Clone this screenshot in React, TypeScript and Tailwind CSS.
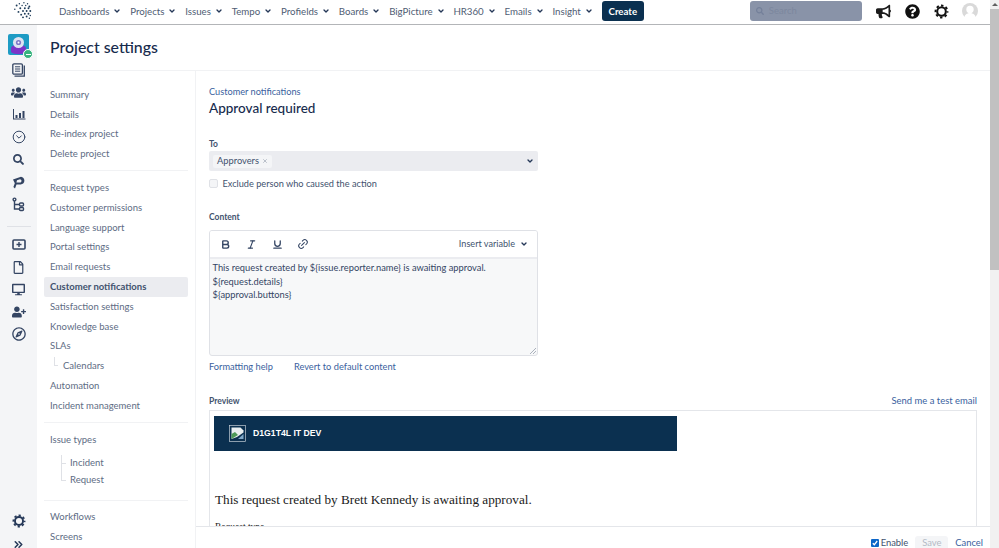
import { Bold, ChevronDown, Italic, Link2, Underline, X, ChevronsRight, CircleChevronDown } from "lucide-react";
import { FaBullhorn, FaQuestionCircle, FaUsers, FaSearch, FaRegFile, FaUserPlus, FaRegCompass, FaDesktop } from "react-icons/fa";

const menus = ["Dashboards", "Projects", "Issues", "Tempo", "Profields", "Boards", "BigPicture", "HR360", "Emails", "Insight"];

const groupA = ["Summary", "Details", "Re-index project", "Delete project"];
const groupB = ["Request types", "Customer permissions", "Language support", "Portal settings", "Email requests", "Customer notifications", "Satisfaction settings", "Knowledge base", "SLAs"];

function Logo() {
  // dotted globe mark
  const dots = [[3,9],[5,5],[7,12],[8,3],[9,8],[10,15],[11,5],[12,11],[12,18],[13,2],[14,8],[14,14],[15,5],[16,11],[16,17],[17,3],[18,8],[18,14],[19,19],[19,6],[20,11],[20,16]];
  return (
    <svg width="22" height="20" viewBox="0 0 24 22" className="text-[#1d3b58]">
      {dots.map(([x, y], i) => <circle key={i} cx={x} cy={y} r={i % 3 === 0 ? 0.8 : 1.05} fill="currentColor" />)}
    </svg>
  );
}

function ProjectAvatar() {
  return (
    <div className="relative h-[21px] w-[21px]">
      <svg width="21" height="21" viewBox="0 0 21 21" className="rounded-[2px]">
        <rect width="21" height="21" fill="#1d9bc4" />
        <path d="M3 14c1-3 4-3 7-3s7 0 8 3v4c-3 3-12 3-15 0z" fill="#7b35c8" />
        <circle cx="10.5" cy="8.5" r="5.5" fill="#dfe3f2" />
        <circle cx="10.5" cy="8.5" r="2.6" fill="#7f79c8" />
        <circle cx="10.5" cy="8.5" r="1" fill="#fff" />
      </svg>
      <div className="absolute right-[-4px] bottom-[-4px] flex h-[10px] w-[10px] items-center justify-center rounded-full border border-white bg-[#36b37e]">
        <div className="h-[1px] w-[5px] bg-white" />
      </div>
    </div>
  );
}

function CogIcon({ size, color }: { size: number; color: string }) {
  // ring with chunky teeth
  return (
    <svg width={size} height={size} viewBox="0 0 16 16" fill="none" stroke={color}>
      <circle cx="8" cy="8" r="4.6" strokeWidth="2.2" />
      <circle cx="8" cy="8" r="6.4" strokeWidth="2" strokeDasharray="2.6 2.43" strokeDashoffset="1.3" />
    </svg>
  );
}

function IssuesIcon() {
  return (
    <svg width="13" height="14" viewBox="0 0 13 14" fill="none" stroke="#344563">
      <rect x="0.8" y="0.8" width="9.6" height="10.4" rx="1.2" strokeWidth="1.3" />
      <path d="M3 3.800h5.200M3 6h5.200M3 8.200h5.200" strokeWidth="1" />
      <path d="M12.300 2.500v10.700H2.500" strokeWidth="1.300" />
    </svg>
  );
}

function ChartIcon() {
  return (
    <svg width="14" height="13" viewBox="0 0 14 13" fill="#344563">
      <path d="M1 1v10.5h12.5v-1H2V1z" />
      <rect x="3.5" y="7" width="2" height="3" />
      <rect x="7" y="5" width="2" height="5" />
      <rect x="10.5" y="3" width="2" height="7" />
    </svg>
  );
}

function TreeIcon() {
  return (
    <svg width="13" height="15" viewBox="0 0 13 15" fill="none" stroke="#344563" strokeWidth="1.4">
      <circle cx="2.5" cy="2.5" r="1.4" />
      <path d="M2.5 4v8h5M2.5 7.500h5" />
      <rect x="7.500" y="6" width="4" height="3" rx="1" />
      <rect x="7.500" y="10.500" width="4" height="3" rx="1" />
    </svg>
  );
}

function ShipIcon() {
  return (
    <svg width="13" height="13" viewBox="0 0 13 13" fill="#344563">
      <path d="M1 3.500 9 .8c2 .2 3.400 2 3.400 4 0 2.300-2 3.600-3.600 3.600H4.500L3 12.600 1.400 11l1.400-3.800zM5 4.200l-.6 2.200h3.500c1 0 1.600-.7 1.600-1.500S8.800 3.300 8 3.300z" />
    </svg>
  );
}

function AddScreenIcon() {
  return (
    <svg width="14" height="11" viewBox="0 0 14 11" fill="none" stroke="#344563" strokeWidth="1.6">
      <rect x="1" y="1" width="12" height="9" rx="1" />
      <path d="M7 3v5M4.500 5.500h5" strokeWidth="1.4" />
    </svg>
  );
}

function RailIcon({ children, h = "h-[22.4px]" }: { children: React.ReactNode; h?: string }) {
  return <div className={`flex w-full items-center justify-center ${h}`}>{children}</div>;
}

function NavRow({ label, active }: { label: string; active?: boolean }) {
  return (
    <div className={`flex h-[19.8px] items-center rounded-[2px] pl-[6px] ${active ? "bg-[#ebecf0] font-bold text-[#42526e]" : "text-[#5e6c84]"}`}>
      {label}
    </div>
  );
}

function Divider() {
  return <div className="h-px bg-[#f1f2f4]" />;
}

export default function App() {
  return (
    <div className="flex h-[548px] w-[999px] overflow-hidden bg-white font-['Lato','Noto_Sans',sans-serif] text-[10px] text-[#172b4d]">
      <div className="flex min-w-0 flex-1 flex-col">
        {/* top bar */}
        <header className="flex h-[25px] shrink-0 items-center border-b-[1.5px] border-[#b3b5b8] bg-white pb-[2px]">
          <div className="ml-[12px] w-[47px] shrink-0"><Logo /></div>
          <nav className="flex shrink-0 items-center gap-[8.800px] text-[9.700px] text-[#4f5d73]">
            {menus.map((m) => (
              <span key={m} className="flex items-center gap-[4px]">
                {m}
                <ChevronDown size={8} strokeWidth={4} className="text-[#253858]" />
              </span>
            ))}
          </nav>
          <button className="ml-[9px] flex h-[20px] w-[42px] shrink-0 items-center justify-center rounded-[3px] bg-[#0b3050] text-[9.700px] font-bold text-white">Create</button>
          <div className="ml-[106px] flex h-[20px] w-[112px] shrink-0 items-center gap-[5px] rounded-[3px] bg-[#8993a8] pl-[6px] text-[9.500px] text-[#7c879e]">
            <FaSearch size={8} className="text-[#74809a]" />
            Search
          </div>
          <FaBullhorn size={15} className="ml-[14px] shrink-0 text-[#1b1b1b]" />
          <FaQuestionCircle size={15} className="ml-[14px] shrink-0 text-[#111]" />
          <span className="ml-[14px] shrink-0"><CogIcon size={15} color="#111" /></span>
          <svg width="16" height="16" viewBox="0 0 16 16" className="ml-[13px] shrink-0">
            <circle cx="8" cy="8" r="8" fill="#d9d9d9" />
            <circle cx="8" cy="6.500" r="3.700" fill="#fff" />
            <path d="M2 16c0-4 3-6 6-6s6 2 6 6z" fill="#fff" />
          </svg>
        </header>

        <div className="flex min-h-0 flex-1">
          {/* left rail */}
          <aside className="flex w-[37px] shrink-0 flex-col items-center bg-[#f4f5f7] pt-[9px]">
            <div className="mb-[4px]"><ProjectAvatar /></div>
            <RailIcon><IssuesIcon /></RailIcon>
            <RailIcon><FaUsers size={15} className="text-[#344563]" /></RailIcon>
            <RailIcon><ChartIcon /></RailIcon>
            <RailIcon><CircleChevronDown size={14} strokeWidth={1.7} className="text-[#344563]" /></RailIcon>
            <RailIcon><FaSearch size={11} className="text-[#344563]" /></RailIcon>
            <RailIcon><ShipIcon /></RailIcon>
            <RailIcon><TreeIcon /></RailIcon>
            <div className="mt-[10px] mb-[7px] h-px w-[24px] bg-[#dfe1e6]" />
            <RailIcon><AddScreenIcon /></RailIcon>
            <RailIcon><FaRegFile size={13} className="text-[#344563]" /></RailIcon>
            <RailIcon><FaDesktop size={13} className="text-[#344563]" /></RailIcon>
            <RailIcon><FaUserPlus size={14} className="text-[#344563]" /></RailIcon>
            <RailIcon><FaRegCompass size={14} className="text-[#344563]" /></RailIcon>
            <div className="flex-1" />
            <div className="mb-[4px] w-full"><RailIcon><CogIcon size={14} color="#253858" /></RailIcon></div>
            <div className="-mb-[4px] w-full"><RailIcon h="h-[16px]"><ChevronsRight size={13} strokeWidth={2.8} className="text-[#253858]" /></RailIcon></div>
          </aside>

          <div className="flex min-w-0 flex-1 flex-col">
            {/* page title */}
            <div className="flex h-[46px] shrink-0 items-center border-b border-[#f1f2f4] pb-[2px] pl-[13px] text-[15.900px] font-medium text-[#172b4d]">Project settings</div>

            <div className="flex min-h-0 flex-1">
              {/* settings nav */}
              <div className="w-[159px] shrink-0 border-r border-[#f1f2f4] pr-[7px] pl-[7px] pt-[14px] text-[9.500px]">
                {groupA.map((l) => <NavRow key={l} label={l} />)}
                <div className="mt-[6px] mb-[7px]"><Divider /></div>
                {groupB.map((l) => <NavRow key={l} label={l} active={l === "Customer notifications"} />)}
                <div className="flex h-[19.800px] items-center pl-[10px] text-[#5e6c84]">
                  <span className="mr-[5px] mb-[9px] h-[9px] w-[4px] border-b border-l border-[#dfe1e6]" />
                  Calendars
                </div>
                <NavRow label="Automation" />
                <NavRow label="Incident management" />
                <div className="mt-[6px] mb-[7px]"><Divider /></div>
                <NavRow label="Issue types" />
                <div className="mt-[5px] flex h-[17px] items-center pl-[17px] text-[#5e6c84]">
                  <span className="mr-[4px] flex h-full w-[5px] items-center border-l border-[#dfe1e6]"><span className="h-px w-full bg-[#dfe1e6]" /></span>
                  Incident
                </div>
                <div className="flex h-[17px] items-center pl-[17px] text-[#5e6c84]">
                  <span className="mr-[4px] h-[9px] w-[5px] self-start border-b border-l border-[#dfe1e6]" />
                  Request
                </div>
                <div className="mt-[11px] mb-[7px]"><Divider /></div>
                <NavRow label="Workflows" />
                <NavRow label="Screens" />
              </div>

              {/* content */}
              <main className="relative min-w-0 flex-1 overflow-hidden pt-[14px] pr-[13px] pl-[13px]">
                <a className="block text-[9.200px] leading-[13px] text-[#3a5f9e]">Customer notifications</a>
                <h1 className="text-[13.500px] leading-[20px] font-medium text-[#172b4d]">Approval required</h1>

                <div className="mt-[20px] text-[8.500px] leading-[12px] font-bold text-[#42526e]">To</div>
                <div className="mt-[1px] flex h-[20px] w-[329px] items-center justify-between rounded-[2px] bg-[#ebecf0] pr-[4px] pl-[4px]">
                  <span className="flex h-[13px] items-center gap-[3px] rounded-[2px] bg-[#f4f5f7] px-[4px] text-[9.300px] text-[#42526e]">
                    Approvers
                    <X size={6} strokeWidth={2.500} className="text-[#97a0af]" />
                  </span>
                  <ChevronDown size={8} strokeWidth={4} className="text-[#253858]" />
                </div>
                <div className="mt-[7px] flex h-[11px] items-center gap-[5px] text-[9.200px] text-[#42526e]">
                  <span className="h-[8.500px] w-[8.500px] rounded-[2px] border border-[#dfe1e6] bg-[#f4f5f7]" />
                  Exclude person who caused the action
                </div>

                <div className="mt-[22px] text-[8.500px] leading-[12px] font-bold text-[#42526e]">Content</div>
                <div className="mt-[7px] w-[329px] overflow-hidden rounded-[3px] border border-[#dfe1e6] bg-[#f7f8f9]">
                  <div className="flex h-[28px] items-center border-b-2 border-[#ebecf0] bg-white pr-[9px] pl-[10px] text-[#42526e]">
                    <Bold size={11} strokeWidth={3} className="text-[#344563]" />
                    <Italic size={11} strokeWidth={2.500} className="ml-[15px] text-[#344563]" />
                    <Underline size={11} strokeWidth={2.800} className="ml-[15px] text-[#344563]" />
                    <Link2 size={12} strokeWidth={2} className="ml-[14px] -rotate-45 text-[#344563]" />
                    <span className="ml-auto flex items-center gap-[5px] text-[9.100px] text-[#42526e]">
                      Insert variable
                      <ChevronDown size={8} strokeWidth={4} className="text-[#253858]" />
                    </span>
                  </div>
                  <div className="relative h-[96px] px-[2.500px] pt-[2px] text-[9.300px] leading-[13.700px] text-[#344563]">
                    <div>This request created by $&#123;issue.reporter.name&#125; is awaiting approval.</div>
                    <div>$&#123;request.details&#125;</div>
                    <div>$&#123;approval.buttons&#125;</div>
                    <svg width="6" height="6" viewBox="0 0 6 6" className="absolute right-[1px] bottom-[1px]" stroke="#8a93a3" strokeWidth="0.700">
                      <path d="M0 6 6 0M3 6l3-3" />
                    </svg>
                  </div>
                </div>
                <div className="mt-[4px] flex gap-[21px] text-[9.250px] leading-[14px] text-[#3a5f9e]">
                  <a>Formatting help</a>
                  <a>Revert to default content</a>
                </div>

                <div className="mt-[20px] flex items-end justify-between text-[8.500px] font-bold text-[#42526e]">
                  <span className="leading-[12px]">Preview</span>
                  <a className="text-[9.450px] leading-[13px] font-normal text-[#3a5f9e]">Send me a test email</a>
                </div>
                <div className="mt-[3px] h-[140px] border border-[#e4e6ea] px-[4px] pt-[5px]">
                  <div className="flex h-[35px] w-[463px] items-center bg-[#0b3050] pl-[15px] font-['Liberation_Sans',Arial,sans-serif] text-[8.700px] font-bold text-white">
                    <svg width="17" height="17" viewBox="0 0 17 17" className="shrink-0">
                      <rect x="0.500" y="0.500" width="16" height="16" fill="none" stroke="#c4cdd6" strokeWidth="0.700" />
                      <path d="M2.500 2.500h9l3 3v2L8 12l-5.500 2z" fill="#e8eef0" />
                      <path d="M2.500 9 6 7l3 3-6.500 4z" fill="#4d9a58" />
                      <path d="M9 14l5.500-5v5z" fill="#7fa8c9" />
                    </svg>
                    <span className="ml-[7px]">D1G1T4L IT DEV</span>
                  </div>
                  <div className="mt-[39px] ml-[1px] font-['Liberation_Serif','Times_New_Roman',serif] text-[13.200px] leading-[19px] text-[#1b1b1b]">This request created by Brett Kennedy is awaiting approval.</div>
                  <div className="mt-[11px] ml-[1px] font-['Liberation_Serif','Times_New_Roman',serif] text-[9.500px] text-[#1b1b1b]">Request type</div>
                </div>

                {/* sticky footer */}
                <div className="absolute right-0 bottom-0 left-0 flex h-[22px] items-center justify-end gap-[7px] border-t border-[#e4e6ea] bg-white pt-[11px] pr-[7px] text-[9.400px]">
                  <span className="flex items-center gap-[2px] text-[#42526e]">
                    <span className="flex h-[8px] w-[8px] items-center justify-center rounded-[1px] bg-[#0c66c8]">
                      <svg width="6" height="6" viewBox="0 0 6 6" fill="none" stroke="#fff" strokeWidth="1.300"><path d="M.8 3.200 2.300 4.800 5.200 1" /></svg>
                    </span>
                    Enable
                  </span>
                  <span className="flex h-[15px] w-[33px] shrink-0 items-center justify-center rounded-t-[3px] bg-[#f4f5f7] text-[#b3bac5]">Save</span>
                  <a className="text-[#3a5f9e]">Cancel</a>
                </div>
              </main>
            </div>
          </div>
        </div>
      </div>

      {/* page scrollbar */}
      <div className="flex w-[9px] shrink-0 flex-col bg-[#f1f1f1]">
        <div className="flex h-[9px] items-center justify-center">
          <span className="h-0 w-0 border-x-[3px] border-b-[3px] border-x-transparent border-b-[#606060]" />
        </div>
        <div className="h-[261px] bg-[#c1c1c1]" />
      </div>
    </div>
  );
}
